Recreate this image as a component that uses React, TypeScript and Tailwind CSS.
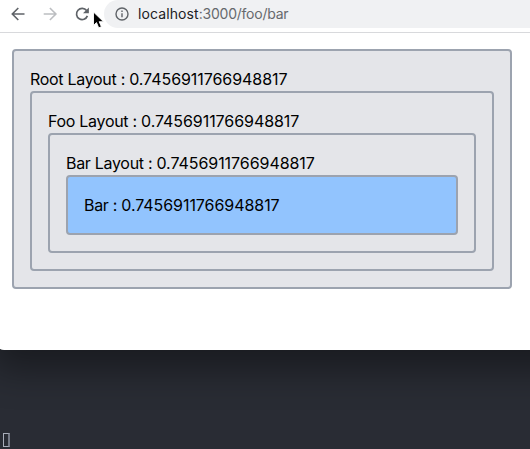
import type { ReactNode } from 'react';

const VALUE = '0.7456911766948817';

function Panel({ label, tone = 'bg-[#e4e5e9]', children }: { label: string; tone?: string; children?: ReactNode }) {
  return (
    <div className={`rounded border-2 border-[#9ca3af] p-4 ${tone}`}>
      <p className="whitespace-nowrap text-base tracking-[-0.3px] text-black">
        {label} : <span className="tracking-[-0.06px]">{VALUE}</span>
      </p>
      {children}
    </div>
  );
}

function Toolbar() {
  return (
    <header className="relative flex h-[33px] items-start border-b border-[#d8d9dc] bg-white">
      <div className="flex h-7 w-[104px] shrink-0 items-center pl-[10px]">
        <svg width="16" height="16" viewBox="0 0 16 16" fill="none" stroke="#5f6368" strokeWidth="1.6">
          <path d="M14.5 8H2.8M8.3 2L2.3 8l6 6" />
        </svg>
        <svg className="ml-4" width="16" height="16" viewBox="0 0 16 16" fill="none" stroke="#bcbec1" strokeWidth="1.6">
          <path d="M1.7 8h11.7M7.9 2l6 6-6 6" />
        </svg>
        <svg className="ml-4" width="16" height="16" viewBox="0 0 16 16">
          <path d="M12.6 4.6A5.6 5.6 0 1 0 13.4 9.9" fill="none" stroke="#5f6368" strokeWidth="1.7" />
          <path d="M14.9 1.4v5.9H9z" fill="#5f6368" />
        </svg>
      </div>
      <div className="flex h-7 grow items-center rounded-l-full bg-[#f0f1f3] pl-[11px]">
        <svg width="14" height="14" viewBox="0 0 14 14" fill="none" stroke="#5f6368" strokeWidth="1.4">
          <circle cx="7" cy="7" r="6" />
          <path d="M7 6.2v4M7 3.6v1.5" />
        </svg>
        <span className="ml-[9px] whitespace-nowrap text-sm leading-7 tracking-[-0.23px] text-[#66696d]">
          <span className="tracking-[0.1px] text-[#202124]">localhost</span>:3000/foo/bar
        </span>
      </div>
      <svg className="absolute left-[92px] top-[11px]" width="13" height="18" viewBox="0 0 13 18">
        <path d="M1.5 1v13.4l3-2.8 2.2 5.2 2.7-1.1-2.2-5h4.3z" fill="#000" stroke="#fff" strokeWidth="0.9" />
      </svg>
    </header>
  );
}

export default function App() {
  return (
    <div className="flex h-[449px] w-[530px] flex-col overflow-hidden bg-[#292c34] font-['Inter','Liberation_Sans',sans-serif]">
      <div className="-ml-1 h-[350px] w-[600px] shrink-0 rounded-bl-lg bg-white pl-1 shadow-[0_16px_36px_4px_rgba(0,0,0,0.38)]">
        <div className="w-[530px]">
          <Toolbar />
          <main className="pl-3 pr-[18px] pt-4">
            <Panel label="Root Layout">
              <Panel label="Foo Layout">
                <Panel label="Bar Layout">
                  <Panel label="Bar" tone="bg-[#92c4fe]" />
                </Panel>
              </Panel>
            </Panel>
          </main>
        </div>
      </div>
      <div className="flex grow items-end pb-[2px] pl-[3px]">
        <div className="h-[14px] w-[7px] border border-r-2 border-[#a8adb9] border-r-[#747985]" />
      </div>
    </div>
  );
}
